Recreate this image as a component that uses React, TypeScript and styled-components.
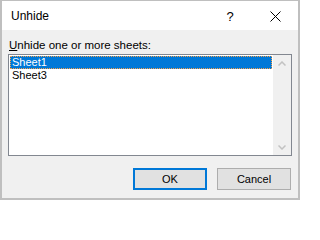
import React from "react";
import styled, { createGlobalStyle } from "styled-components";

const Global = createGlobalStyle`
  html, body { margin: 0; padding: 0; background: #ffffff; }
  body { font-family: "Liberation Sans", Arial, sans-serif; }
  * { box-sizing: border-box; }
`;

const Frame = styled.div`
  width: 300px;
  height: 200px;
  display: flex;
  flex-direction: column;
  border-style: solid;
  border-color: #bfbfbf;
  border-width: 1px 2px 2px 2px;
  font-family: "Liberation Sans", Arial, sans-serif;
  font-size: 12px;
  color: #000;
`;

const TitleBar = styled.div`
  height: 29px;
  flex: none;
  background: #ffffff;
  display: flex;
  align-items: center;
  padding-left: 9px;
`;

const Title = styled.div`
  flex: 1;
  font-size: 12px;
  line-height: 16px;
  margin-top: 1px;
`;

const CaptionButton = styled.div<{ $w: number }>`
  width: ${(p) => p.$w}px;
  height: 29px;
  display: flex;
  align-items: center;
  justify-content: center;
  font-size: 13px;
  padding-top: 1px;
`;

const Body = styled.div`
  flex: 1;
  background: #f0f0f0;
  display: flex;
  flex-direction: column;
  padding: 8px 6px 0 6px;
`;

const Label = styled.div`
  padding-left: 1px;
  font-size: 11.5px;
  line-height: 15px;
  height: 16px;
  white-space: nowrap;
  u { text-decoration-thickness: 1px; text-underline-offset: 1px; }
`;

const ListBox = styled.div`
  height: 102px;
  border: 1px solid #828790;
  background: #ffffff;
  display: flex;
`;

const Items = styled.div`
  flex: 1;
  padding: 1px;
  display: flex;
  flex-direction: column;
`;

const Item = styled.div<{ $selected?: boolean }>`
  height: 13px;
  line-height: 13px;
  padding-left: 2px;
  font-size: 11px;
  background: ${(p) => (p.$selected ? "#0078d7" : "transparent")};
  color: ${(p) => (p.$selected ? "#ffffff" : "#000000")};
  outline: ${(p) => (p.$selected ? "1px dotted #f5a04a" : "none")};
  outline-offset: -1px;
`;

const ScrollBar = styled.div`
  width: 18px;
  background: #f0f0f0;
  display: flex;
  flex-direction: column;
  justify-content: space-between;
  align-items: center;
  padding: 6px 0 5px 0;
`;

const Buttons = styled.div`
  display: flex;
  justify-content: flex-end;
  gap: 10px;
  margin-top: 12px;
  padding-right: 1px;
`;

const Button = styled.div<{ $default?: boolean }>`
  width: 74px;
  height: 22px;
  background: #e1e1e1;
  border: ${(p) => (p.$default ? "2px solid #0078d7" : "1px solid #adadad")};
  display: flex;
  align-items: center;
  justify-content: center;
  font-size: 11px;
`;

const Chevron = ({ up }: { up?: boolean }) => (
  <svg width="8" height="5" viewBox="0 0 8 5">
    <path
      d={up ? "M0.5 4.5 L4 1 L7.5 4.5" : "M0.5 0.5 L4 4 L7.5 0.5"}
      fill="none"
      stroke="#c2c2c2"
      strokeWidth="1.5"
    />
  </svg>
);

export default function App() {
  return (
    <>
      <Global />
      <Frame>
        <TitleBar>
          <Title>Unhide</Title>
          <CaptionButton $w={44}>?</CaptionButton>
          <CaptionButton $w={46}>
            <svg width="11" height="11" viewBox="0 0 11 11">
              <path d="M0.5 0.5 L10.5 10.5 M10.5 0.5 L0.5 10.5" stroke="#000" strokeWidth="1" />
            </svg>
          </CaptionButton>
        </TitleBar>
        <Body>
          <Label>
            <u>U</u>nhide one or more sheets:
          </Label>
          <ListBox>
            <Items>
              <Item $selected>Sheet1</Item>
              <Item>Sheet3</Item>
            </Items>
            <ScrollBar>
              <Chevron up />
              <Chevron />
            </ScrollBar>
          </ListBox>
          <Buttons>
            <Button $default>OK</Button>
            <Button>Cancel</Button>
          </Buttons>
        </Body>
      </Frame>
    </>
  );
}
